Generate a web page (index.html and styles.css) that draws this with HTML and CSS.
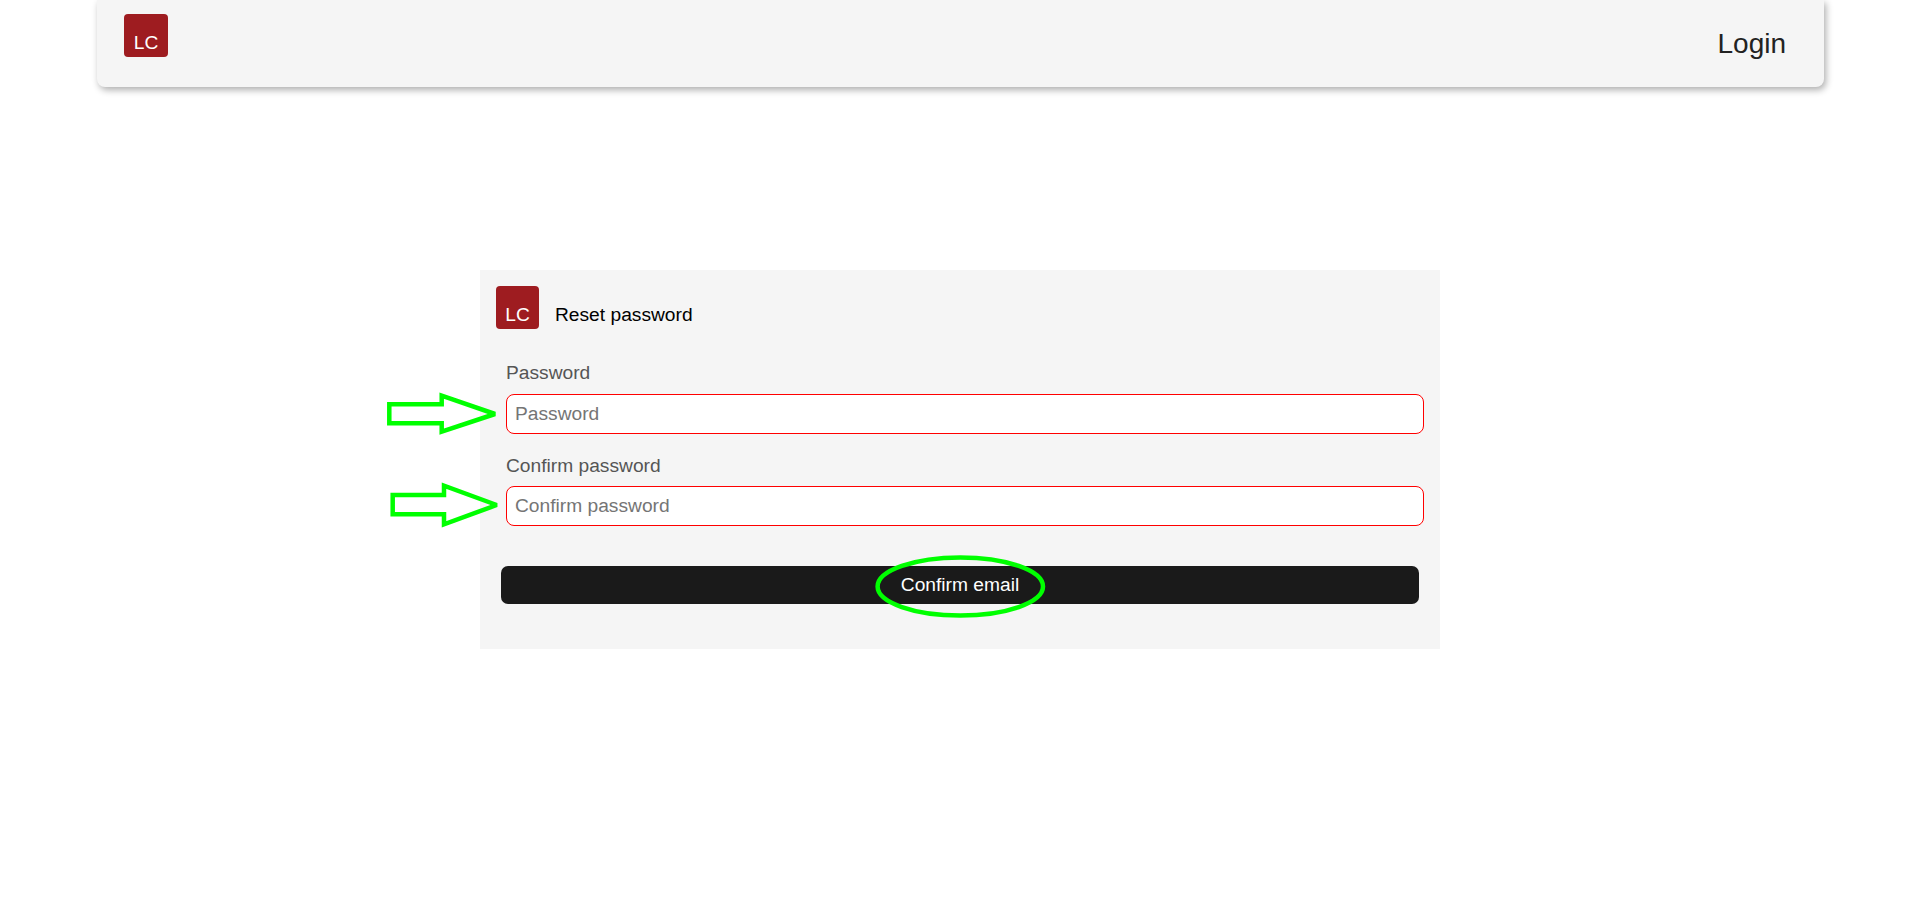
FILE: index.html
```html
<!DOCTYPE html>
<html lang="en">
<head>
<meta charset="utf-8">
<title>Reset password</title>
<link rel="stylesheet" href="styles.css">
</head>
<body>
<header class="navbar">
  <div class="logo logo-nav">LC</div>
  <a class="nav-link" href="#">Login</a>
</header>
<main class="page">
  <form class="card">
    <div class="card-head">
      <div class="logo">LC</div>
      <h1 class="card-title">Reset password</h1>
    </div>
    <div class="field">
      <label class="field-label" for="pw">Password</label>
      <input class="field-input" id="pw" type="password" placeholder="Password">
    </div>
    <div class="field">
      <label class="field-label" for="cpw">Confirm password</label>
      <input class="field-input" id="cpw" type="password" placeholder="Confirm password">
    </div>
    <button class="submit" type="button">Confirm email</button>
  </form>
</main>
<svg class="annotations" width="1920" height="919" viewBox="0 0 1920 919" aria-hidden="true">
  <path d="M389.3 404.3H441.7V395.7L495 414L441.7 431.7V423.3H389.3Z"/>
  <path d="M392.7 495H444V485.7L496.7 505L444 524.3V514.3H392.7Z"/>
  <ellipse cx="960.3" cy="586.5" rx="82.7" ry="29"/>
</svg>
</body>
</html>
```

FILE: styles.css
```css
* { box-sizing: border-box; }
html, body { margin: 0; height: 100%; }
body {
  background: #fff;
  font-family: "Liberation Sans", Arial, sans-serif;
  font-size: 19.2px;
  overflow: hidden;
}
.navbar {
  display: flex;
  justify-content: space-between;
  height: 87px;
  margin: 0 96px 0 97px;
  padding: 14px 38px 0 27px;
  background: #f5f5f5;
  border-radius: 0 0 8px 8px;
  box-shadow: 2px 3px 7px rgba(0, 0, 0, 0.32);
}
.logo {
  display: flex;
  align-items: flex-end;
  justify-content: center;
  width: 43px;
  height: 43px;
  padding-bottom: 3px;
  flex: none;
  background: #9e1c20;
  border-radius: 4px;
  color: #fff;
  font-size: 19.2px;
  line-height: 22px;
}
.logo-nav {
  width: 44px;
}
.nav-link {
  margin-top: 14px;
  color: #222;
  font-size: 28px;
  line-height: 32px;
  text-decoration: none;
}
.page {
  display: flex;
  justify-content: center;
  padding-top: 183px;
}
.card {
  width: 960px;
  height: 379px;
  padding: 16px;
  background: #f5f5f5;
}
.card-head {
  display: flex;
  align-items: flex-start;
  gap: 16px;
}
.card-title {
  margin: 18px 0 0;
  color: #000;
  font-size: 19.2px;
  font-weight: 400;
  line-height: 22px;
}
.field {
  margin: 0 0 0 10px;
}
.field-label {
  display: block;
  color: #555;
  line-height: 22px;
  padding-top: 21px;
  margin-bottom: 9px;
}
.card-head + .field .field-label {
  padding-top: 33px;
  margin-bottom: 10px;
}
.field-input {
  display: block;
  width: 918px;
  height: 40px;
  padding: 0 8px;
  background: #fff;
  border: 1px solid #f00;
  border-radius: 8px;
  font: 19.2px "Liberation Sans", Arial, sans-serif;
  color: #333;
}
.field-input::placeholder {
  color: #757575;
  opacity: 1;
}
.submit {
  display: block;
  width: 918px;
  height: 38px;
  margin: 40px 0 0 5px;
  background: #1a1a1a;
  border: 0;
  border-radius: 7px;
  color: #fff;
  font: 19.2px "Liberation Sans", Arial, sans-serif;
}
.annotations {
  position: absolute;
  top: 0;
  left: 0;
  fill: none;
  stroke: #00ff00;
  stroke-width: 4.5;
  stroke-linejoin: miter;
  stroke-miterlimit: 2;
  pointer-events: none;
}
```
